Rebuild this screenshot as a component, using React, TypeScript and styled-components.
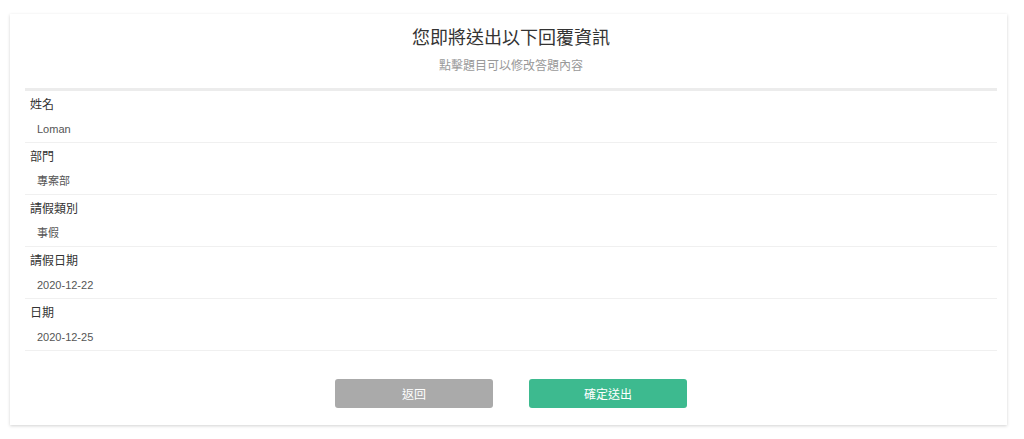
import styled, { createGlobalStyle } from "styled-components";

const GlobalStyle = createGlobalStyle`
  html, body {
    margin: 0;
    padding: 0;
    background: #fff;
    font-family: "Liberation Sans", "Noto Sans CJK TC", sans-serif;
  }
`;

const answers = [
  { label: "姓名", value: "Loman" },
  { label: "部門", value: "專案部" },
  { label: "請假類別", value: "事假" },
  { label: "請假日期", value: "2020-12-22" },
  { label: "日期", value: "2020-12-25" },
];

export default function App() {
  return (
    <>
      <GlobalStyle />
      <Page>
        <Card>
          <Header>
            <Title>您即將送出以下回覆資訊</Title>
            <Subtitle>點擊題目可以修改答題內容</Subtitle>
          </Header>
          <List>
            {answers.map((a) => (
              <Row key={a.label}>
                <Label>{a.label}</Label>
                <Value>{a.value}</Value>
              </Row>
            ))}
          </List>
          <Actions>
            <Button $variant="back">返回</Button>
            <Button $variant="submit">確定送出</Button>
          </Actions>
        </Card>
      </Page>
    </>
  );
}

const Page = styled.div`
  padding: 14px 17px 14px 10px;
`;

const Card = styled.div`
  background: #fff;
  box-shadow: 0 1px 3px rgba(0, 0, 0, 0.18);
  padding: 12px 10px 17px 15px;
`;

const Header = styled.div`
  text-align: center;
  border-bottom: 3px solid #ececec;
  padding-bottom: 14px;
`;

const Title = styled.div`
  font-size: 18px;
  line-height: 24px;
  color: #333;
`;

const Subtitle = styled.div`
  margin-top: 8px;
  font-size: 12px;
  line-height: 16px;
  color: #999;
`;

const List = styled.div`
  display: flex;
  flex-direction: column;
`;

const Row = styled.div`
  padding: 5px 0 5px;
  border-bottom: 1px solid #f0f0f0;
  cursor: pointer;
`;

const Label = styled.div`
  padding-left: 5px;
  font-size: 12px;
  line-height: 18px;
  color: #333;
`;

const Value = styled.div`
  margin-top: 7px;
  padding-left: 12px;
  font-size: 11px;
  line-height: 16px;
  color: #555;
`;

const Actions = styled.div`
  display: flex;
  justify-content: center;
  gap: 36px;
  margin-top: 28px;
`;

const Button = styled.button<{ $variant: "back" | "submit" }>`
  width: 158px;
  height: 29px;
  border: none;
  border-radius: 3px;
  font-family: inherit;
  font-size: 12px;
  color: #fff;
  cursor: pointer;
  background: ${(p) => (p.$variant === "submit" ? "#3dba8f" : "#aaaaaa")};
`;
